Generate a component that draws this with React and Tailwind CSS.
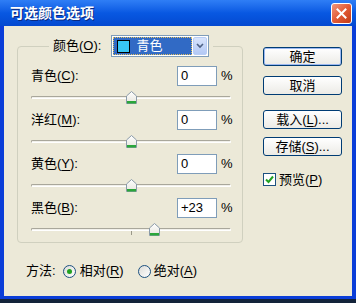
import React from "react";

const font = { fontFamily: '"Liberation Sans", "Noto Sans CJK SC", sans-serif' };

const Key = ({ children }) => <span className="underline underline-offset-2">{children}</span>;

const Thumb = () => (
  <svg width="11" height="13" viewBox="0 0 11 13" className="block">
    <defs>
      <linearGradient id="tg" x1="0" y1="0" x2="0" y2="1">
        <stop offset="0" stopColor="#ffffff" />
        <stop offset="1" stopColor="#e6e5dc" />
      </linearGradient>
    </defs>
    <path d="M0.5 5 L5.5 0.5 L10.5 5 L10.5 12.5 L0.5 12.5 Z" fill="url(#tg)" stroke="#8a9aa8" />
    <rect x="1" y="10" width="9" height="2.5" fill="#2aa63a" />
  </svg>
);

const Slider = ({ value }) => {
  const pos = 100 + value;
  return (
    <div className="relative h-6 w-[200px]">
      <div className="absolute left-0 right-0 top-[10px] h-[3px] rounded-full border border-[#a9a79b] border-b-white border-r-white bg-[#f1f0ea]" />
      {value !== 0 && <div className="absolute left-[100px] top-[13px] h-[4px] w-px bg-[#9a9888]" />}
      <div className="absolute top-[5px]" style={{ left: pos - 5 }}>
        <Thumb />
      </div>
    </div>
  );
};

const Row = ({ label, k, value }) => (
  <div>
    <div className="flex h-5 items-center">
      <span className="w-[146px] text-[13px] text-black">
        {label}(<Key>{k}</Key>):
      </span>
      <div className="flex h-5 w-[40px] items-center border border-[#7f9db9] bg-white pl-[3px] text-[13px]">{value}</div>
      <span className="ml-[4px] text-[13px]">%</span>
    </div>
    <Slider value={value === "+23" ? 23 : 0} />
  </div>
);

const Button = ({ children, primary }) => (
  <button
    className={`flex h-[19px] w-[79px] items-center justify-center rounded-[3px] border border-[#003c74] bg-gradient-to-b from-white to-[#ecebe6] text-[13px] text-black ${
      primary ? "shadow-[inset_0_0_0_1px_#9cb8f0]" : ""
    }`}
  >
    {children}
  </button>
);

const Radio = ({ checked }) => (
  <span className="flex h-[13px] w-[13px] items-center justify-center rounded-full border border-[#1c5180] bg-gradient-to-br from-[#dcdcd7] to-white">
    {checked && <span className="h-[5px] w-[5px] rounded-full bg-[#21a121]" />}
  </span>
);

export default function App() {
  return (
    <div className="h-[303px] w-[356px] overflow-hidden bg-[#13233a]" style={font}>
      <div className="flex h-[299px] w-[356px] flex-col border-x-4 border-b-[3px] border-[#0a3dd8] border-t-0">
        {/* Title bar */}
        <div className="-mx-1 flex h-[26px] items-center justify-between bg-gradient-to-b from-[#2f7ef5] via-[#0858e2] to-[#0449d0] pl-[10px] pr-[4px]">
          <span className="text-[14px] font-bold text-white [text-shadow:1px_1px_0_#0a2a80]">可选颜色选项</span>
          <span className="flex h-[21px] w-[21px] items-center justify-center rounded-[3px] border border-white bg-gradient-to-br from-[#f0957a] via-[#e25a35] to-[#c23b14]">
            <svg width="11" height="11" viewBox="0 0 11 11">
              <path d="M1.5 1.5 L9.5 9.5 M9.5 1.5 L1.5 9.5" stroke="white" strokeWidth="2" strokeLinecap="square" />
            </svg>
          </span>
        </div>

        {/* Content */}
        <div className="flex flex-1 bg-[#ece9d8] pl-[13px] text-black">
          <div className="flex flex-col pt-[9px]">
            <fieldset className="w-[226px] rounded-[4px] border border-[#d0d0bf] pb-0 pl-[13px] pt-[9px]">
              <legend className="ml-[18px] flex items-center px-[4px]">
                <span className="text-[13px]">
                  颜色(<Key>O</Key>):
                </span>
                <div className="ml-[10px] flex h-[22px] w-[98px] items-center border border-[#7f9db9] bg-white p-[1px]">
                  <div className="flex h-full flex-1 items-center border border-dotted border-[#e0c060] bg-[#316ac5] pl-[3px]">
                    <span className="h-[13px] w-[13px] border border-black bg-[#38c6f4]" />
                    <span className="ml-[6px] text-[13px] text-white">青色</span>
                  </div>
                  <div className="ml-[1px] flex h-full w-[14px] items-center justify-center rounded-[2px] border border-[#b9cdf5] bg-gradient-to-b from-[#d8e4fb] to-[#b3c9f5]">
                    <svg width="8" height="6" viewBox="0 0 8 6">
                      <path d="M1 1 L4 4 L7 1" fill="none" stroke="#4d6185" strokeWidth="1.6" />
                    </svg>
                  </div>
                </div>
              </legend>
              <Row label="青色" k="C" value="0" />
              <Row label="洋红" k="M" value="0" />
              <Row label="黄色" k="Y" value="0" />
              <Row label="黑色" k="B" value="+23" />
            </fieldset>

            <div className="ml-[9px] mt-[18px] flex h-5 items-center text-[13px]">
              <span>方法:</span>
              <span className="ml-[7px]">
                <Radio checked />
              </span>
              <span className="ml-[4px]">
                相对(<Key>R</Key>)
              </span>
              <span className="ml-[14px]">
                <Radio />
              </span>
              <span className="ml-[3px]">
                绝对(<Key>A</Key>)
              </span>
            </div>
          </div>

          <div className="ml-[20px] flex flex-col pt-[21px]">
            <Button primary>确定</Button>
            <div className="mt-[10px]">
              <Button>取消</Button>
            </div>
            <div className="mt-[15px]">
              <Button>
                载入(<Key>L</Key>)...
              </Button>
            </div>
            <div className="mt-[8px]">
              <Button>
                存储(<Key>S</Key>)...
              </Button>
            </div>
            <div className="mt-[14px] flex items-center text-[13px]">
              <span className="flex h-[13px] w-[13px] items-center justify-center border border-[#1c5180] bg-white">
                <svg width="9" height="9" viewBox="0 0 9 9">
                  <path d="M1 4.5 L3.5 7 L8 1.5" fill="none" stroke="#21a121" strokeWidth="2" />
                </svg>
              </span>
              <span className="ml-[3px]">
                预览(<Key>P</Key>)
              </span>
            </div>
          </div>
        </div>
      </div>
    </div>
  );
}
